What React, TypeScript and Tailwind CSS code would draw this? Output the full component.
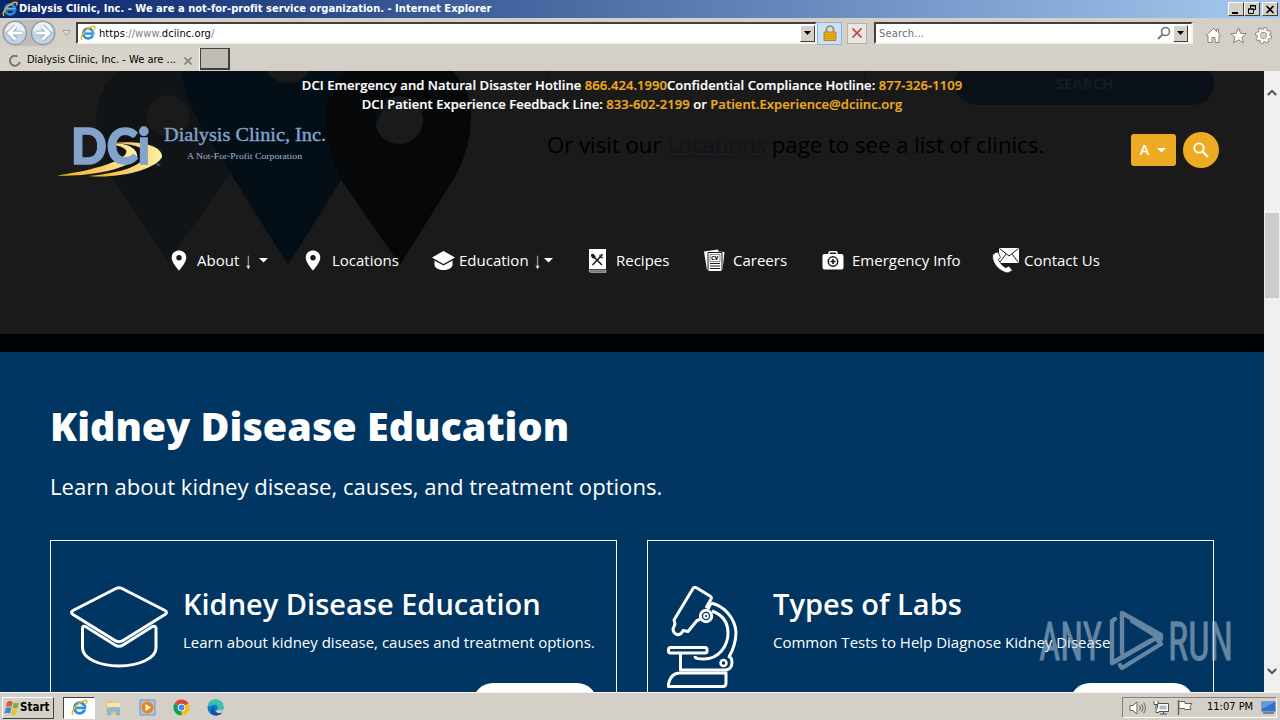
import React from 'react';
import clsx from 'clsx';

const UI_FONT = "font-['DejaVu_Sans_Condensed','DejaVu_Sans',sans-serif] [font-stretch:condensed]";

const IeLogo = ({ className }: { className?: string }) => (
    <svg viewBox="0 0 16 16" className={className} fill="none">
        <path d="M12.9 10.2A5 5 0 1 1 13.2 8.4H4.8" stroke="#2f8fd8" strokeWidth="2.6" />
        <path d="M4.8 7.2h8" stroke="#8fd0f5" strokeWidth="1" />
        <path d="M2.2 14.6C-.4 13.6 2.6 8.2 6.6 4.8 10.4 1.6 14.8.2 15 2.2c.1.8-.4 1.6-.8 2.2" stroke="#e8b820" strokeWidth="1.5" />
    </svg>
);

const WinButton = ({ children, className }: { children: React.ReactNode; className?: string }) => (
    <div className={clsx('flex h-[14px] w-4 items-center justify-center border border-t-white border-l-white border-r-[#404040] border-b-[#404040] bg-[#d4d0c8]', className)}>
        {children}
    </div>
);

const DropButton = () => (
    <div className="flex h-[17px] w-[15px] items-center justify-center border border-t-white border-l-white border-r-[#404040] border-b-[#404040] bg-[#d4d0c8]">
        <svg viewBox="0 0 7 4" className="h-1 w-[7px]"><path d="M0 0h7L3.5 4z" fill="#000" /></svg>
    </div>
);

const TitleBar = () => (
    <div className="flex h-[18px] items-center bg-gradient-to-r from-[#0a246a] to-[#a6caf0] pr-[2px] pl-[2px]">
        <IeLogo className="h-4 w-4" />
        <span className="ml-px flex-1 pt-px text-[11px] font-bold tracking-[0.03px] whitespace-nowrap text-white">
            Dialysis Clinic, Inc. - We are a not-for-profit service organization. - Internet Explorer
        </span>
        <WinButton><svg viewBox="0 0 10 9" className="h-[9px] w-[10px]"><path d="M1 7h6v2H1z" /></svg></WinButton>
        <WinButton>
            <svg viewBox="0 0 10 9" className="h-[9px] w-[10px]" fill="none" stroke="#000">
                <path d="M3.5 3V.5h5v4H7M3 1h6M1.5 4v4.5h5V4zM1 4h6" />
            </svg>
        </WinButton>
        <WinButton className="ml-[2px]">
            <svg viewBox="0 0 10 9" className="h-[9px] w-[10px]" stroke="#000" strokeWidth="1.6"><path d="M1.5 1l7 7M8.5 1l-7 7" /></svg>
        </WinButton>
    </div>
);

const NavArrow = ({ flip }: { flip?: boolean }) => (
    <svg viewBox="0 0 26 26" className={clsx('h-[26px] w-[26px]', flip && '-scale-x-100')}>
        <circle cx="13" cy="13" r="11.5" fill="#c3d3e2" stroke="#8b9aab" strokeWidth="1.3" />
        <path d="M3 12a10 10 0 0 1 20 0c-5-2-14-2-20 0z" fill="#eaf0f6" />
        <path d="M13.5 6.5L7 13l6.5 6.5M7.5 13H20" fill="none" stroke="#8fa3b8" strokeWidth="4.6" />
        <path d="M13.5 6.5L7 13l6.5 6.5M7.5 13H20" fill="none" stroke="#fff" strokeWidth="3" />
    </svg>
);

const AddressRow = () => (
    <div className="flex h-[30px] items-center pl-[2px]">
        <div className="flex gap-[2px] rounded-full bg-[#c0bebb]">
            <NavArrow />
            <NavArrow flip />
        </div>
        <div className="flex w-5 justify-center">
            <svg viewBox="0 0 9 6" className="h-[6px] w-[9px]"><path d="M.5.5h8l-4 5z" fill="#dedad4" stroke="#aaa59c" /></svg>
        </div>
        <div className="flex h-[22px] w-[741px] items-center border-2 border-t-[#404040] border-l-[#404040] border-r-[#f4f2ee] border-b-[#f4f2ee] bg-white">
            <IeLogo className="ml-[2px] h-4 w-4" />
            <span className="ml-[3px] flex-1 pt-[2px] text-[11px] tracking-[0.08px] text-black">
                <span>https</span><span className="text-[#808080]">://www.</span>dciinc.org<span className="text-[#808080]">/</span>
            </span>
            <DropButton />
        </div>
        <div className="flex h-[23px] w-[25px] items-center justify-center border border-[#8ab3e0] bg-[#c9e0f7]">
            <svg viewBox="0 0 14 16" className="h-4 w-[14px]">
                <path d="M3.5 8V4.500a3.500 3.500 0 0 1 7 0V8" fill="none" stroke="#a8863a" strokeWidth="1.7" />
                <path d="M1 7h12v8.500H1z" fill="#e9b417" stroke="#a97a08" strokeWidth=".8" />
                <path d="M1.500 9.500h11M1.500 11.500h11M1.500 13.500h11" stroke="#c48e0c" strokeWidth=".7" />
            </svg>
        </div>
        <div className="ml-[5px] flex h-[21px] w-[20px] items-center justify-center border border-[#b5b1aa] bg-[#e9e7e4]">
            <svg viewBox="0 0 10 10" className="h-[10px] w-[10px]" stroke="#c4484f" strokeWidth="1.8"><path d="M.5.5l9 9M9.5.5l-9 9" /></svg>
        </div>
        <div className="ml-[7px] flex h-[22px] w-[319px] items-center border-2 border-t-[#404040] border-l-[#404040] border-r-[#f4f2ee] border-b-[#f4f2ee] bg-white pr-[3px]">
            <span className="ml-[3px] flex-1 pt-[2px] text-[11px] tracking-[0.2px] text-[#6d6d6d]">Search...</span>
            <svg viewBox="0 0 14 14" className="mr-[2px] h-[14px] w-[14px]" fill="none" stroke="#77777a" strokeWidth="1.6">
                <circle cx="8.5" cy="5.5" r="4" /><path d="M5.5 8.5L1 13" strokeWidth="2" />
            </svg>
            <DropButton />
        </div>
        <div className="ml-3 flex items-center gap-2 pt-[4px]">
            <svg viewBox="0 0 17 17" className="h-[17px] w-[17px]" fill="#fff" stroke="#86827c" strokeWidth="1">
                <path d="M8.5 1.5L1 8.5l1 1 1-.8V15.500h4v-5h3v5h4V8.700l1 .8 1-1L13.500 6V2.500h-2v2z" />
            </svg>
            <svg viewBox="0 0 17 17" className="h-[17px] w-[17px]" fill="#fff" stroke="#86827c" strokeWidth="1">
                <path d="M8.5 1l2.200 5.300 5.500.4-4.200 3.600 1.400 5.500-4.900-3-4.900 3 1.400-5.500L.8 6.700l5.500-.4z" />
            </svg>
            <svg viewBox="0 0 18 18" className="h-[17px] w-[17px]">
                <circle cx="9" cy="9" r="7.2" fill="none" stroke="#86827c" strokeWidth="3.6" strokeDasharray="3.4 2.25" />
                <circle cx="9" cy="9" r="5.2" fill="none" stroke="#86827c" strokeWidth="4.4" />
                <circle cx="9" cy="9" r="7" fill="none" stroke="#fff" strokeWidth="2" strokeDasharray="2.4 3.1" strokeDashoffset="-.5" />
                <circle cx="9" cy="9" r="5" fill="none" stroke="#fff" strokeWidth="2.8" />
            </svg>
        </div>
    </div>
);

const TabRow = () => (
    <div className="flex h-[23px]">
        <div className="flex h-[23px] w-[200px] items-center border-r border-[#f8f7f4] bg-[#d8d4cc] pt-[2px] pl-[9px]">
            <svg viewBox="0 0 12 12" className="h-3 w-3" fill="none" stroke="#77756f" strokeWidth="1.9"><path d="M8.5 1.500a5 5 0 1 0 2.300 5.500" /></svg>
            <span className="ml-[6px] w-[157px] text-[11px] whitespace-nowrap text-black">Dialysis Clinic, Inc. - We are ...</span>
            <svg viewBox="0 0 8 8" className="h-2 w-2" stroke="#86827c" strokeWidth="1.8"><path d="M.5.5l7 7M7.5.5l-7 7" /></svg>
        </div>
        <div className="h-[22px] w-[30px] border border-r-2 border-b-2 border-[#404040] bg-[#bfbbb5]" />
    </div>
);

const DciLogo = () => (
    <svg viewBox="0 0 270 54" className="h-[54px] w-[270px] overflow-visible">
        <defs>
            <linearGradient id="swoosh" x1="0" x2="1">
                <stop offset="0" stopColor="#f0b400" />
                <stop offset=".45" stopColor="#f9c560" />
                <stop offset="1" stopColor="#fbf3a0" />
            </linearGradient>
        </defs>
        <path d="M53 20Q66 22 69 26C73 34 46 45 0 51.500 32 53 70 45 80 34 82 24 68 18 53 20z" fill="url(#swoosh)" />
        <path d="M56 19C74 20 88 22 88 31 86 41 66 49 31 52 66 55 100 44 105 33 106 22 84 16 56 19z" fill="url(#swoosh)" />
        <g fill="#83a3cd" stroke="#83a3cd">
            <text x="14" y="39.5" fontFamily="Lato, sans-serif" fontWeight="900" fontSize="50" strokeWidth="1.6" textLength="79" lengthAdjust="spacingAndGlyphs">DCi</text>
            <path d="M40 22h8" strokeWidth="5" />
        </g>
        <g fill="#83a3cd" fontFamily="'Liberation Serif', serif">
            <text x="107" y="17" fontSize="19" stroke="#83a3cd" strokeWidth=".4" textLength="162" lengthAdjust="spacingAndGlyphs">Dialysis Clinic, Inc.</text>
            <text x="130" y="35" fontSize="8.5" fill="#9fb9d9" textLength="115" lengthAdjust="spacingAndGlyphs">A Not-For-Profit Corporation</text>
            <text x="99" y="43" fontSize="6">®</text>
        </g>
    </svg>
);

const PinIcon = () => (
    <svg viewBox="0 0 16 21" className="h-[21px] w-4" fill="#fff">
        <path fillRule="evenodd" d="M8 .5C3.700.5.700 3.700.700 7.700.700 12.500 8 20.500 8 20.500s7.300-8 7.300-12.800C15.300 3.700 12.300.5 8 .5zM8 5a2.700 2.700 0 1 1 0 5.400A2.700 2.700 0 0 1 8 5z" />
    </svg>
);

const CapIcon = () => (
    <svg viewBox="0 0 23 19" className="h-[19px] w-[23px]" fill="#fff">
        <path d="M11.500 0L0 6.500 11.500 13 23 6.500zM2.500 9.500V14c0 3 5 5 9 5s9-2 9-5V9.500l-9 5z" />
    </svg>
);

const RecipeIcon = () => (
    <svg viewBox="0 0 19 24" className="mt-[2px] h-6 w-[19px]">
        <path d="M1 0h17v20H1z" fill="#fff" />
        <path d="M1 21h17v2.500H2.500Q1 23.500 1 21z" fill="#777" stroke="#ddd" strokeWidth=".5" />
        <g stroke="#1a1a1a" fill="none">
            <path d="M4 6l10 10" strokeWidth="1.5" />
            <path d="M14.500 5.500L4.500 16" strokeWidth="1.5" />
            <ellipse cx="5.2" cy="7.2" rx="1.2" ry="2.2" transform="rotate(-45 5.2 7.2)" fill="#1a1a1a" />
            <path d="M12 5.500v3l3 .3M14 5l-1 2.500" />
        </g>
    </svg>
);

const CareersIcon = () => (
    <svg viewBox="0 0 22 23" className="h-[23px] w-[22px]">
        <path d="M0 2.500L14 .5l.5 2L20.500 3 18.500 21H3z" fill="#fff" />
        <path d="M4 3.500h14v19H4z" fill="#fff" stroke="#1a1a1a" />
        <path d="M6 5.500h10v7H6z" fill="none" stroke="#1a1a1a" strokeWidth=".5" />
        <text x="7" y="11" fontSize="5.5" fontWeight="800" fontFamily="'Open Sans', sans-serif" fill="#1a1a1a">CV</text>
        <path d="M6 14.500h10M6 17h10M6 19.500h10" stroke="#1a1a1a" strokeWidth="1.1" />
    </svg>
);

const KitIcon = () => (
    <svg viewBox="0 0 22 19" className="h-[19px] w-[22px]">
        <path d="M7 4V2q0-1.200 1.200-1.200h5.600Q15 .8 15 2v2" fill="none" stroke="#fff" strokeWidth="1.5" />
        <rect x=".5" y="3" width="21" height="15.5" rx="2" fill="#fff" />
        <circle cx="11" cy="10.5" r="4.7" fill="none" stroke="#1a1a1a" strokeWidth="1.5" />
        <path d="M11 8v5M8.500 10.500h5" stroke="#1a1a1a" strokeWidth="1.6" />
    </svg>
);

const ContactIcon = () => (
    <svg viewBox="0 0 28 26" className="h-[26px] w-[28px]">
        <path d="M7 1h20v15H7z" fill="#fff" />
        <path d="M7.500 1.500L17 9l9.500-7.500M7.500 15.500L14 7M26.500 15.500L20 7" fill="none" stroke="#1a1a1a" strokeWidth="1" />
        <path d="M3.500 5.500L.8 7.500C-1 14 6 24.500 16 26l4.500-2.500-3.500-4.500-3.500 1.700C10.500 19 7.500 15.500 6.500 12.500L8.500 10.500 6 5z" fill="#fff" stroke="#1a1a1a" strokeWidth=".8" />
    </svg>
);

const navItems = [
    { label: 'About', arrow: true, icon: <PinIcon />, item: 'w-[134px]', box: 'w-[26px]', caret: 'ml-[5px]' },
    { label: 'Locations', icon: <PinIcon />, item: 'w-[127px]', box: 'w-[27px]' },
    { label: 'Education', arrow: true, icon: <CapIcon />, item: 'w-[156px]', box: 'w-[27px]', caret: 'ml-0' },
    { label: 'Recipes', icon: <RecipeIcon />, item: 'w-[116px]', box: 'w-[28px]' },
    { label: 'Careers', icon: <CareersIcon />, item: 'w-[118px]', box: 'w-[29px]' },
    { label: 'Emergency Info', icon: <KitIcon />, item: 'w-[170px]', box: 'w-[30px]' },
    { label: 'Contact Us', icon: <ContactIcon />, item: 'w-[120px]', box: 'w-[32px]' },
];

// Page content that shows through the translucent sticky header
const HeaderBackdrop = () => (
    <div className="absolute inset-0 overflow-hidden">
        <svg viewBox="0 0 1264 263" className="absolute inset-0 h-[263px] w-[1264px]">
            <path fillRule="evenodd" fill="#101416" d="M168 191L112 106Q96 75 96 47 100 -10 168 -20 240 -10 240 47 240 80 228 106zM168 24a21 21 0 1 0 .1 0z" />
            <path fillRule="evenodd" fill="#030e16" d="M288 194L204 60Q184 24 181 0V-20H395V0Q392 24 372 60zM288 -38a25 25 0 1 0 .1 0z" />
            <path fillRule="evenodd" fill="#050709" d="M400 194L342 110Q326 80 326 45 330 -10 400 -26 470 -10 471 47 471 75 456 104zM399 25a24 24 0 1 0 .1 0z" />
            <path d="M547.500 0v30M865.500 0v30" stroke="#101010" />
        </svg>
        <div className="absolute top-[-9px] left-[955px] flex h-[43px] w-[259px] items-center justify-center rounded-full bg-[#091017] pb-px text-[15px] font-bold text-[#151c23]">
            SEARCH
        </div>
        <p className="absolute top-[57px] left-[547px] text-[22.16px] leading-8 whitespace-nowrap text-black">
            Or visit our <span className="inline-block h-[29px] border-b border-[#0f131a] text-[#10131b]">Locations</span> page to see a list of clinics.
        </p>
    </div>
);

const SiteHeader = () => (
    <header className="relative h-[263px] bg-[#1a1a1a]">
        <HeaderBackdrop />
        <div className="relative flex h-full flex-col">
            <div className="pt-[5px] text-center text-[13px] leading-[19px] font-semibold tracking-[0.06px] text-white [-webkit-text-stroke:0.2px]">
                <p>DCI Emergency and Natural Disaster Hotline <span className="text-[#ecab23]">866.424.1990</span>Confidential Compliance Hotline: <span className="text-[#ecab23]">877-326-1109</span></p>
                <p>DCI Patient Experience Feedback Line: <span className="text-[#ecab23]">833-602-2199</span> or <span className="text-[#ecab23]">Patient.Experience@dciinc.org</span></p>
            </div>
            <div className="flex items-start justify-between pt-[10px] pr-[45px] pl-[57px]">
                <DciLogo />
                <div className="flex items-center gap-[7px] pt-2">
                    <button className="flex h-8 w-[45px] items-center justify-center gap-2 rounded-[3px] bg-[#ecab23] pr-px text-[14.5px] font-semibold text-white">
                        A
                        <svg viewBox="0 0 9 5" className="h-[5px] w-[9px]"><path d="M0 0h9L4.500 4.500z" fill="#fff" /></svg>
                    </button>
                    <button className="flex h-9 w-9 items-center justify-center rounded-full bg-[#ecab23]">
                        <svg viewBox="0 0 16 16" className="h-4 w-4" fill="none" stroke="#fff" strokeWidth="1.8">
                            <circle cx="6" cy="6" r="4.7" /><path d="M9.500 9.500l5.500 5.500" strokeWidth="2.200" />
                        </svg>
                    </button>
                </div>
            </div>
            <nav className="mt-[68px] flex h-7 items-center pl-[171px] text-[15px] text-white">
                {navItems.map(({ label, arrow, icon, item, box, caret }) => (
                    <a key={label} className={clsx('flex shrink-0 items-center whitespace-nowrap', item)}>
                        <span className={clsx('shrink-0', box)}>{icon}</span>
                        <span>{label}</span>
                        {arrow && (
                            <>
                                <span className="ml-[3px] w-3 scale-y-[1.6] text-center font-['Liberation_Sans',sans-serif] text-[14px] leading-4">↓</span>
                                <svg viewBox="0 0 9 5" className={clsx('h-[5px] w-[9px]', caret)}><path d="M0 0h9L4.500 4.500z" fill="#fff" /></svg>
                            </>
                        )}
                    </a>
                ))}
            </nav>
        </div>
    </header>
);

const GraduationArt = () => (
    <svg viewBox="0 0 98 82" className="h-[82px] w-[98px]" fill="none" stroke="#fff" strokeWidth="3" strokeLinejoin="round">
        <path d="M46 2.500Q49 1 52 2.500L95 24.500Q98 26.500 95 28.500L53 54.500Q49 57 45 54.500L3 28.500Q0 26.500 3 24.500z" />
        <path d="M12.500 42q0-2.500 3-1.500L45 59q4 2.500 8 0L82.500 40.500q3-1 3.500 1.500V62C86 72 69 80 49 80S12.500 72 12.500 62z" />
    </svg>
);

const MicroscopeArt = () => (
    <svg viewBox="0 0 72 102" className="h-[102px] w-[72px]" fill="none" stroke="#fff" strokeWidth="3" strokeLinejoin="round">
        <path d="M29 1.500L43 10q2 1 1 3l-5 9M29 1.500q-2-.5-3 1L7 34l1 4-2 5q0 4 4 5.500 4 1 6-4l5 1 9-11 3-1" />
        <circle cx="39" cy="30" r="5.7" />
        <circle cx="39" cy="30" r="2" strokeWidth="1.8" />
        <path d="M44 17C58 20 68 33 69 46c0 10-3 18-7 25M45 25C56 29 61 37 61 47c0 14-10 26-24 26-5 0-9 0-9-3M44 17l-3 6" />
        <rect x="1.5" y="61.5" width="38.5" height="5.5" rx="2" />
        <path d="M13.500 67v17H58c5 0 7-4 7-8 0-3-1-5-4-6" />
        <circle cx="56.5" cy="77" r="3" strokeWidth="2.5" />
        <path d="M13 87h46v10q0 3.500-3 3.500H1.500V98C3 91 7 87 13 87z" />
    </svg>
);

type CardProps = {
    title: string;
    text: string;
    art: React.ReactNode;
    artBox: string;
};

const Card = ({ title, text, art, artBox }: CardProps) => (
    <div className="flex h-[200px] w-[567px] flex-col border border-white pt-[44px] pl-[19px] text-white">
        <div className="flex h-[98px] items-start">
            <div className={clsx('shrink-0 pt-px', artBox)}>{art}</div>
            <div className="whitespace-nowrap">
                <h3 className="text-[29px] leading-[38px] font-semibold">{title}</h3>
                <p className="mt-[8px] text-[15px] leading-[22px]">{text}</p>
            </div>
        </div>
        <div className="mr-[19px] h-10 w-[124px] shrink-0 self-end rounded-full bg-white" />
    </div>
);

const Education = () => (
    <section className="flex h-[340px] flex-col overflow-hidden bg-[#003661] px-[50px] text-white">
        <h1 className="mt-[46px] text-[39.5px] leading-[56px] font-extrabold">Kidney Disease Education</h1>
        <p className="mt-4 text-[22.1px] leading-8">Learn about kidney disease, causes, and treatment options.</p>
        <div className="mt-[38px] flex gap-[30px]">
            <Card title="Kidney Disease Education" text="Learn about kidney disease, causes and treatment options." art={<GraduationArt />} artBox="w-[113px]" />
            <Card title="Types of Labs" text="Common Tests to Help Diagnose Kidney Disease" art={<MicroscopeArt />} artBox="w-[106px]" />
        </div>
    </section>
);

const Scrollbar = () => (
    <div className="flex h-[621px] w-4 flex-col items-center bg-[#f1f0ef]">
        <svg viewBox="0 0 10 7" className="mt-[18px] h-[7px] w-[10px]" fill="none" stroke="#505050" strokeWidth="2"><path d="M.8 6L5 1.800 9.200 6" /></svg>
        <div className="mt-[117px] h-[85px] w-[14px] bg-[#cdcdcd]" />
        <svg viewBox="0 0 10 7" className="mt-auto mb-[17px] h-[7px] w-[10px]" fill="none" stroke="#505050" strokeWidth="2"><path d="M.8 1L5 5.200 9.200 1" /></svg>
    </div>
);

const Watermark = () => (
    <svg viewBox="0 0 200 66" className="absolute top-[607px] left-[1035px] h-[66px] w-[200px] opacity-55">
        <g fill="#b9c9d8" stroke="#b9c9d8" strokeWidth=".8" fontFamily="Roboto, sans-serif" fontSize="53">
            <text x="4" y="53" textLength="63" lengthAdjust="spacingAndGlyphs">ANY</text>
            <text x="133" y="53" textLength="65" lengthAdjust="spacingAndGlyphs">RUN</text>
        </g>
        <g fill="none" stroke="#b9c9d8" strokeWidth="4.4" strokeLinejoin="round" strokeLinecap="round">
            <path d="M87 46V6L126 28v4L97 14" />
            <path d="M80 12l-3 2v42l38-22" />
            <path d="M79 55l42-24 5 6-39 24-2-3" />
        </g>
    </svg>
);

const Taskbar = () => (
    <footer className="flex h-7 items-center border-t border-[#f4f2ee] bg-[#d4d0c8] pt-[2px]">
        <div className="ml-[2px] flex h-[22px] w-[52px] items-center border border-t-white border-l-white border-r-[#404040] border-b-[#404040] pl-px">
            <svg viewBox="0 0 16 16" className="h-4 w-4 shrink-0">
                <path d="M3 2q3-2 5.500 0L7.500 7Q5 5.500 2 7z" fill="#e2572b" />
                <path d="M9.500 2.500q3 1.500 5.500 0L13.500 8q-2.500 1.200-5 0z" fill="#76b043" />
                <path d="M1.800 8q3-1.500 5.500 0L6 13.500q-2.500-1.500-5.500 0z" fill="#3c86d0" />
                <path d="M8.300 9q3 1.500 5 0L12 14q-2.500 1.500-5 0z" fill="#f3bd26" />
            </svg>
            <span className="text-[11.5px] font-bold text-black">Start</span>
        </div>
        <div className="ml-[9px] flex h-[22px] w-[32px] items-center justify-center border border-t-[#404040] border-l-[#404040] border-r-white border-b-white bg-white">
            <IeLogo className="h-[17px] w-[17px]" />
        </div>
        <div className="ml-[10px] flex items-center gap-[17px]">
            <svg viewBox="0 0 17 17" className="h-[17px] w-[17px]">
                <path d="M1 2h6l1 1.500h7V15H1z" fill="#e5c56a" />
                <path d="M2 4h13v5H2z" fill="#f7e7ac" />
                <path d="M2.500 16V9.500q0-1 1-1h10q1 0 1 1V16h-3v-4h-6v4z" fill="#83bde0" stroke="#6aa2c8" strokeWidth=".5" />
            </svg>
            <svg viewBox="0 0 17 17" className="h-[17px] w-[17px]">
                <path d="M1 1h15v15H1z" fill="#a9c6e6" stroke="#6d94c0" />
                <circle cx="8.5" cy="8.5" r="6" fill="#ef8412" />
                <path d="M6.500 5l5.500 3.500L6.500 12z" fill="#fff" />
            </svg>
            <svg viewBox="0 0 17 17" className="h-[17px] w-[17px]">
                <path d="M8.500 8.500L1.570 4.500A8 8 0 0 1 15.430 4.500z" fill="#db4437" />
                <path d="M8.500 8.500L15.430 4.500A8 8 0 0 1 8.500 16.500z" fill="#f4c20d" />
                <path d="M8.500 8.500V16.500A8 8 0 0 1 1.570 4.500z" fill="#0f9d58" />
                <circle cx="8.5" cy="8.5" r="3.8" fill="#fff" />
                <circle cx="8.5" cy="8.5" r="2.9" fill="#4285f4" />
            </svg>
            <svg viewBox="0 0 17 17" className="h-[17px] w-[17px]">
                <circle cx="8.5" cy="8.5" r="8" fill="#1479c9" />
                <path d="M.6 8C1 3.500 4.500.5 8.500.5c5 0 8 3.500 8 7 0 2.500-2 3.700-4 3.700-1.500 0-2.500-.7-2-1.500 1-2-.5-4-3-4-3 0-5.500 1-6.900 2.300z" fill="#34c4b0" />
                <path d="M7 7.500c-1.500 3 .5 7 5.500 6.500l3-1C13 17 9 17 6.500 16 3 14 4 8.500 7 7.500z" fill="#104f9c" />
                <path d="M10.500 9.700q-.5 1.500 2 1.500 2.300 0 3.400-1.200l-.6 3.200q-3.800 2-6.300-.7z" fill="#d4d0c8" />
            </svg>
        </div>
        <div className="mr-[3px] ml-auto flex h-[21px] w-[155px] items-center border border-t-[#808080] border-l-[#808080] border-r-white border-b-white pl-[6px]">
            <svg viewBox="0 0 17 14" className="h-[14px] w-[17px]" stroke="#66635e">
                <path d="M1 4.500h3L8 1v12L4 9.500H1z" fill="#fff" />
                <path d="M10.500 4.500q2 2.500 0 5M12.700 3q3 4 0 8M14.700 1.500q3.500 5.500 0 11" fill="none" />
            </svg>
            <svg viewBox="0 0 16 15" className="ml-[7px] h-[15px] w-4" stroke="#55524d">
                <path d="M4.500 3.500h11v8h-11z" fill="#fff" />
                <path d="M6.500 5.500h7v4h-7z" fill="#aebac4" stroke="none" />
                <path d="M7 14h7M10.500 12v2" />
                <path d="M1 1v3.500h4V1M3 4.500v8h3" fill="#fff" />
            </svg>
            <svg viewBox="0 0 16 15" className="ml-[8px] h-[15px] w-4" stroke="#66635e">
                <path d="M1.500 0v15" strokeWidth="1.4" />
                <path d="M2 1.500h6v2h7l-2 3 1 3H7.500v-1H2z" fill="#fff" />
            </svg>
            <span className="ml-[14px] w-[54px] text-[11px] whitespace-nowrap text-black">11:07 PM</span>
            <svg viewBox="0 0 15 13" className="h-[13px] w-[15px]">
                <path d="M.5.5h14v10H.5z" fill="#2b73cf" stroke="#8a9bb0" />
                <path d="M1 1h13L1 8z" fill="#5a9ae8" />
                <path d="M2 12h11" stroke="#5b6675" strokeWidth="1.5" />
            </svg>
        </div>
    </footer>
);

export default function App() {
    return (
        <div className={clsx('relative flex h-[720px] w-[1280px] flex-col overflow-hidden bg-[#d4d0c8]', UI_FONT)}>
            <TitleBar />
            <AddressRow />
            <TabRow />
            <div className="flex h-[621px] font-['Open_Sans',sans-serif] [font-stretch:normal]">
                <main className="w-[1264px]">
                    <SiteHeader />
                    <div className="h-[18px] bg-[#000408]" />
                    <Education />
                </main>
                <Scrollbar />
            </div>
            <Taskbar />
            <Watermark />
        </div>
    );
}
